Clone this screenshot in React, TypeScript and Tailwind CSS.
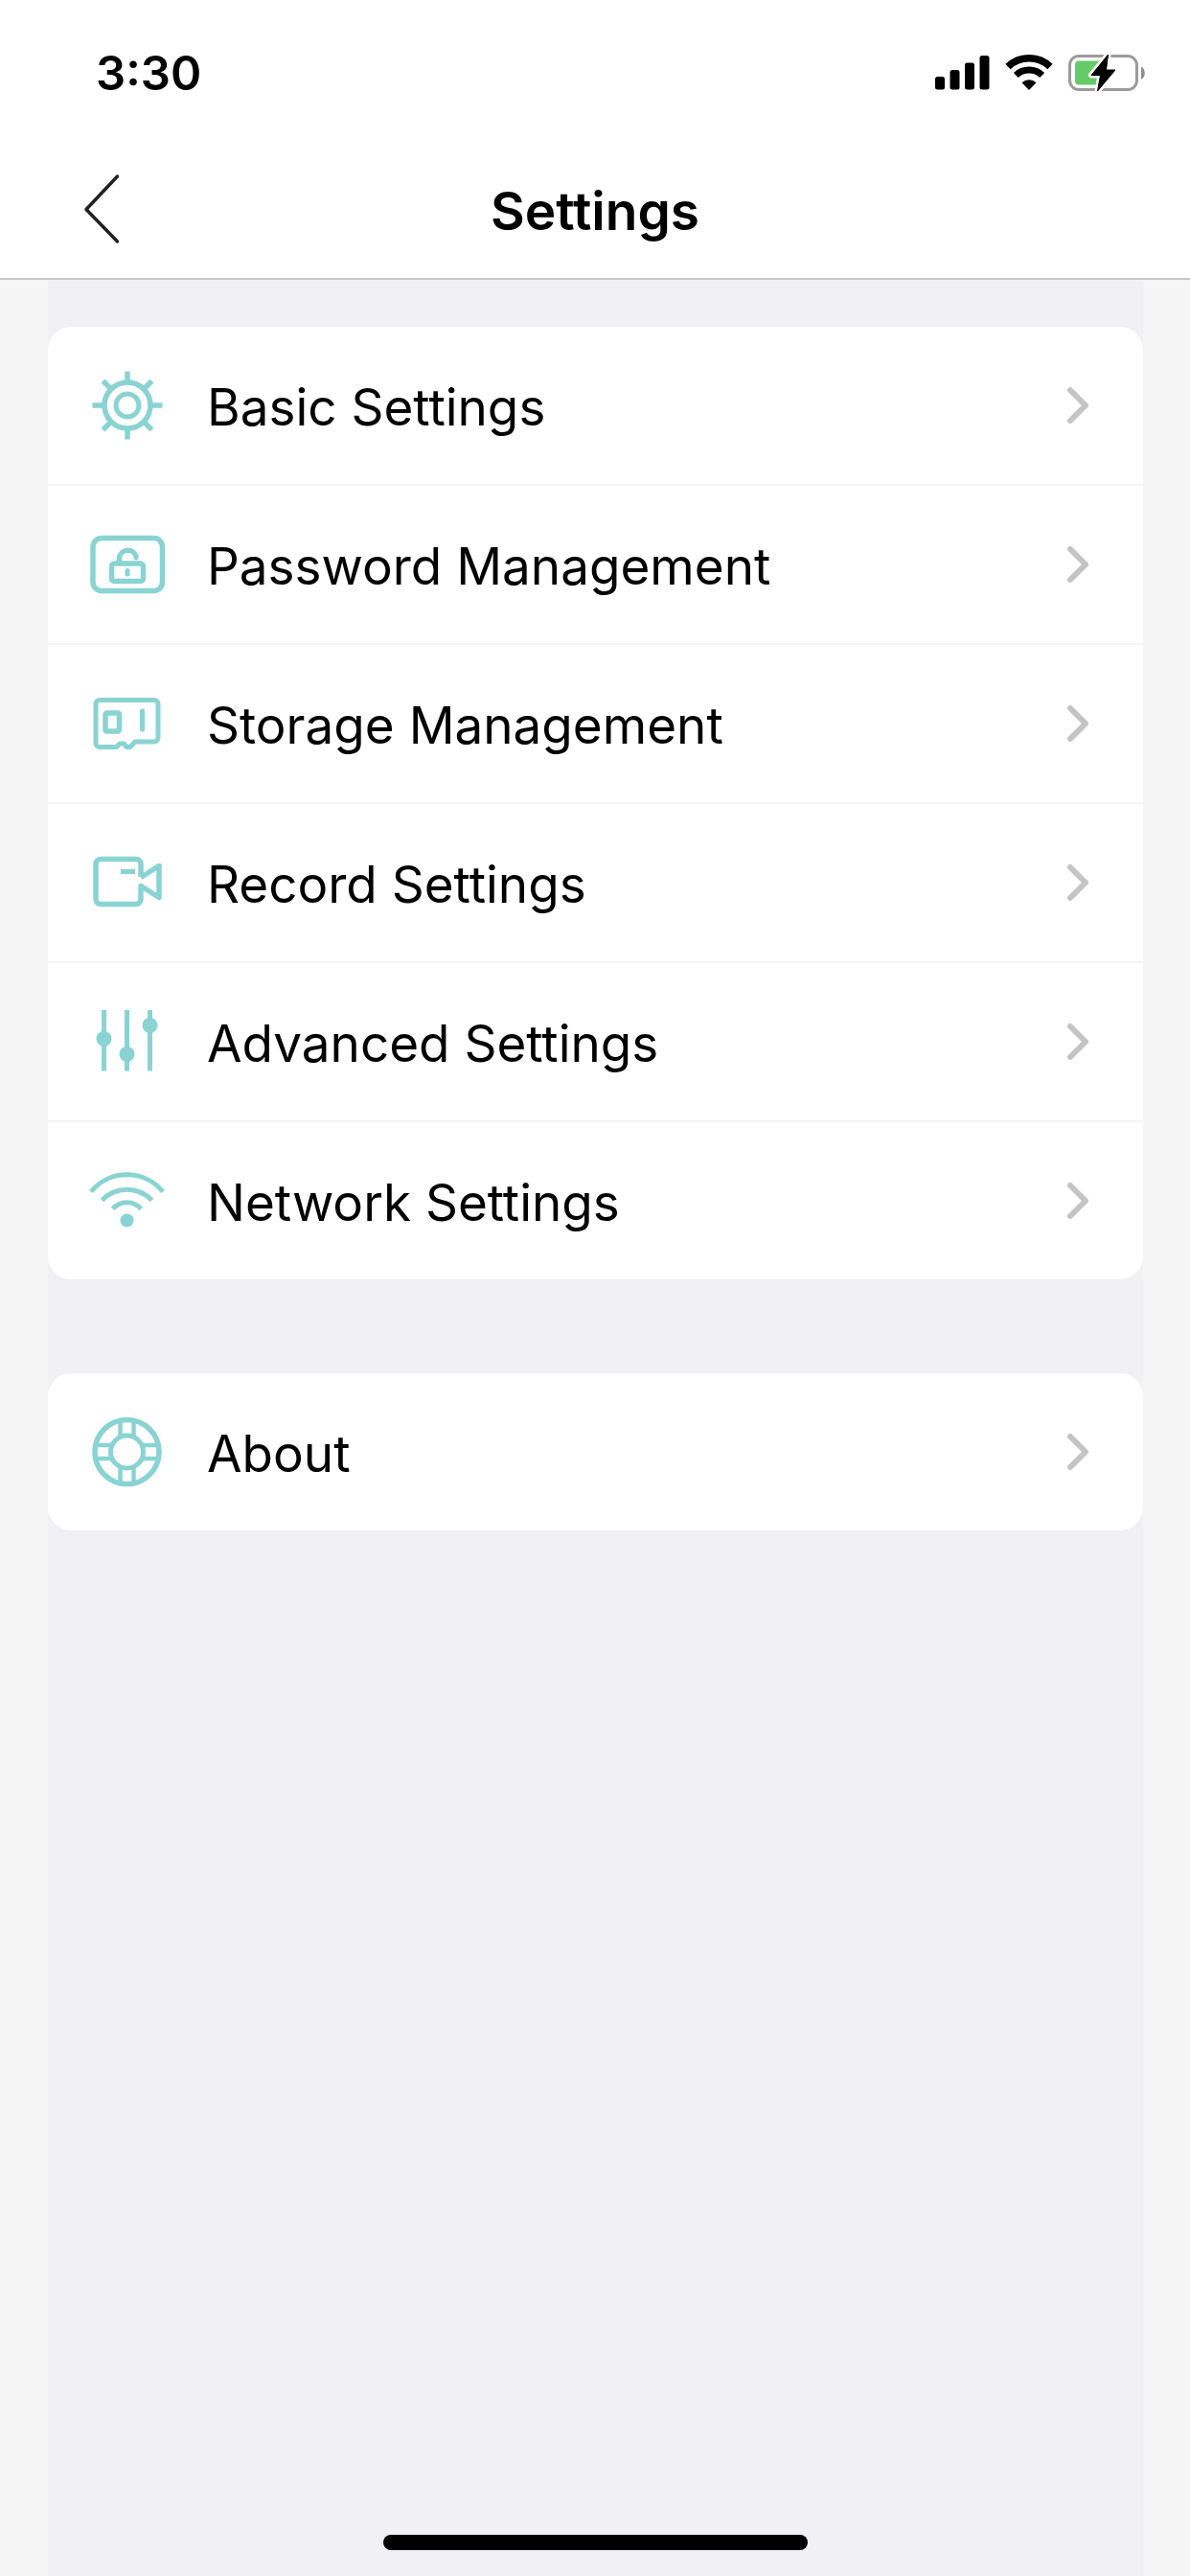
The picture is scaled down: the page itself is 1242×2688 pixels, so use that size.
import type { ReactNode } from "react";

type Item = {
  href: string;
  label: string;
  icon: ReactNode;
};

function Icon({ children }: { children: ReactNode }) {
  return (
    <svg
      viewBox="0 0 80 80"
      className="size-20 shrink-0 text-[#8ad3d3]"
      fill="none"
      stroke="currentColor"
      strokeWidth="5.5"
      strokeLinejoin="round"
      aria-hidden="true"
    >
      {children}
    </svg>
  );
}

const mainItems: Item[] = [
  {
    href: "#basic",
    label: "Basic Settings",
    icon: (
      <Icon>
        <circle cx="40" cy="40" r="24" />
        <circle cx="40" cy="40" r="12" strokeWidth="5" />
        <path d="M40 16V4.5M40 64v11.5M16 40H3.5M64 40h12.5M57 23l8.500-8.500M23 23l-8.500-8.500M23 57l-8.500 8.500M57 57l8.500 8.500" />
      </Icon>
    ),
  },
  {
    href: "#password",
    label: "Password Management",
    icon: (
      <Icon>
        <rect x="4" y="12.5" width="72.5" height="55" rx="9" />
        <rect x="23.5" y="39" width="33" height="18.5" rx="3" />
        <path d="M31.5 39v-6a9 9 0 0 1 17.5-1.500" />
        <path d="M49 31.500v1.500M40 46.500v3.500" strokeLinecap="round" strokeWidth="5" />
      </Icon>
    ),
  },
  {
    href: "#storage",
    label: "Storage Management",
    icon: (
      <Icon>
        <path
          d="M11 15.500H68a4 4 0 0 1 4 4V55a4 4 0 0 1-4 4H48l-5 5.500h-4L36.500 61H32l-3.500 3.500H11a4 4 0 0 1-4-4v-41a4 4 0 0 1 4-4Z"
          strokeWidth="5"
        />
        <rect x="17" y="29" width="14.5" height="19" rx="1.5" />
        <path d="M55.500 27v19" strokeLinecap="round" strokeWidth="5" />
      </Icon>
    ),
  },
  {
    href: "#record",
    label: "Record Settings",
    icon: (
      <Icon>
        <path d="M54 34V20.500a5 5 0 0 0-5-5H12a5 5 0 0 0-5 5v37a5 5 0 0 0 5 5h37a5 5 0 0 0 5-5V43.500L73 55.500v-33L54 34.500" />
        <path d="M33 28.500h15" strokeWidth="5" />
      </Icon>
    ),
  },
  {
    href: "#advanced",
    label: "Advanced Settings",
    icon: (
      <Icon>
        <path d="M15.500 7v63.500M39.500 7v63.500M63.500 7v63.500" strokeWidth="5" />
        <g fill="currentColor" stroke="none">
          <circle cx="15.5" cy="37" r="8" />
          <circle cx="39.5" cy="53" r="8" />
          <circle cx="63.5" cy="23" r="8" />
        </g>
      </Icon>
    ),
  },
  {
    href: "#network",
    label: "Network Settings",
    icon: (
      <Icon>
        <path
          d="M2 30.500a48.700 48.700 0 0 1 75 0M13.500 39.500a35.500 35.500 0 0 1 52 0M24.700 48.500a19.500 19.500 0 0 1 29.500 0"
          strokeWidth="5"
        />
        <circle cx="39.5" cy="60.5" r="7" fill="currentColor" stroke="none" />
      </Icon>
    ),
  },
];

const otherItems: Item[] = [
  {
    href: "#about",
    label: "About",
    icon: (
      <Icon>
        <circle cx="39.5" cy="40" r="33.5" />
        <circle cx="39.5" cy="40" r="17" strokeWidth="5" />
        <path
          d="M32.500 24V7.500M46.500 24V7.500M32.500 56v16.500M46.500 56v16.500M23.500 33H7M23.500 47H7M55.500 33H72M55.500 47H72"
          strokeWidth="4.5"
        />
      </Icon>
    ),
  },
];

function StatusBar() {
  return (
    <div className="flex h-[152px] items-center justify-between pr-[47px] pl-[100px]">
      <span className="text-[49px] leading-none font-semibold">3:30</span>
      <div className="flex items-center gap-4">
        {/* Signal */}
        <svg viewBox="0 0 57 36" className="h-9 w-[57px]" aria-hidden="true">
          <rect x="0" y="22" width="10" height="13.5" rx="2.5" />
          <rect x="15.5" y="15" width="10" height="20.5" rx="2.5" />
          <rect x="31" y="7.5" width="10" height="28" rx="2.5" />
          <rect x="46.5" y="0" width="10" height="35.5" rx="2.5" />
        </svg>
        {/* Wifi */}
        <svg viewBox="0 0 50 38" className="h-[38px] w-[50px]" fill="none" stroke="black" aria-hidden="true">
          <path d="M3 12.500a32 32 0 0 1 44 0" strokeWidth="7.5" />
          <path d="M11.300 21.500a20 20 0 0 1 27.400 0" strokeWidth="7" />
          <path d="M25 37l-7.500-7.800a11 11 0 0 1 15 0Z" fill="black" stroke="none" />
        </svg>
        {/* Battery */}
        <svg viewBox="0 0 80 40" className="h-10 w-20" aria-hidden="true">
          <rect x="1.5" y="2.5" width="70" height="35" rx="9.5" fill="none" stroke="#9b9b9b" strokeWidth="3" />
          <path d="M76 13.500c5 2.500 5 11 0 13.500Z" fill="#8e8e8e" />
          <path d="M11 7.500h28v25H11a4 4 0 0 1-4-4v-17a4 4 0 0 1 4-4Z" fill="#65cb67" />
          <path
            d="M41.500 1 24 22.500h9.500L30.500 39 49 17H39.500Z"
            stroke="white"
            strokeWidth="6"
            strokeLinejoin="round"
          />
          <path d="M41.500 1 24 22.500h9.500L30.500 39 49 17H39.500Z" stroke="black" strokeLinejoin="round" />
        </svg>
      </div>
    </div>
  );
}

function SettingsList({ items }: { items: Item[] }) {
  return (
    <ul className="divide-y-2 divide-[#f5f5f6] overflow-hidden rounded-3xl bg-white">
      {items.map((item) => (
        <li key={item.href}>
          <a href={item.href} className="flex h-[164px] items-center pr-14 pl-[43px]">
            {item.icon}
            <span className="ml-[43px] flex-1 pt-1 text-[53px] leading-none">{item.label}</span>
            <svg viewBox="0 0 24 40" className="h-10 w-6 shrink-0" fill="none" aria-hidden="true">
              <path
                d="M4 4l16 16L4 36"
                stroke="#c4c4c4"
                strokeWidth="6"
                strokeLinecap="round"
                strokeLinejoin="round"
              />
            </svg>
          </a>
        </li>
      ))}
    </ul>
  );
}

export default function App() {
  return (
    <div className="flex min-h-screen flex-col bg-[#f5f5f5] font-['Inter',sans-serif] text-black">
      <header className="border-b-2 border-[#c8c8ca] bg-white pb-1.5">
        <StatusBar />
        <div className="grid h-[132px] grid-cols-[1fr_auto_1fr] items-center px-[86px]">
          <button type="button" aria-label="Back" className="justify-self-start">
            <svg viewBox="0 0 40 74" className="h-[74px] w-10" fill="none" aria-hidden="true">
              <path
                d="M36.500 3 4 37.500 36.500 71"
                stroke="#222"
                strokeWidth="3.5"
                strokeLinecap="round"
                strokeLinejoin="round"
              />
            </svg>
          </button>
          <h1 className="pt-1 text-[55px] leading-none font-semibold">Settings</h1>
        </div>
      </header>

      <main className="mr-[49px] ml-[50px] flex flex-1 flex-col bg-[#f0f0f5] pt-[49px]">
        <nav aria-label="Settings" className="flex flex-col gap-[98px]">
          <SettingsList items={mainItems} />
          <SettingsList items={otherItems} />
        </nav>
        {/* Home indicator */}
        <div className="mx-auto mt-auto mb-[27px] h-4 w-[443px] rounded-full bg-black" />
      </main>
    </div>
  );
}
